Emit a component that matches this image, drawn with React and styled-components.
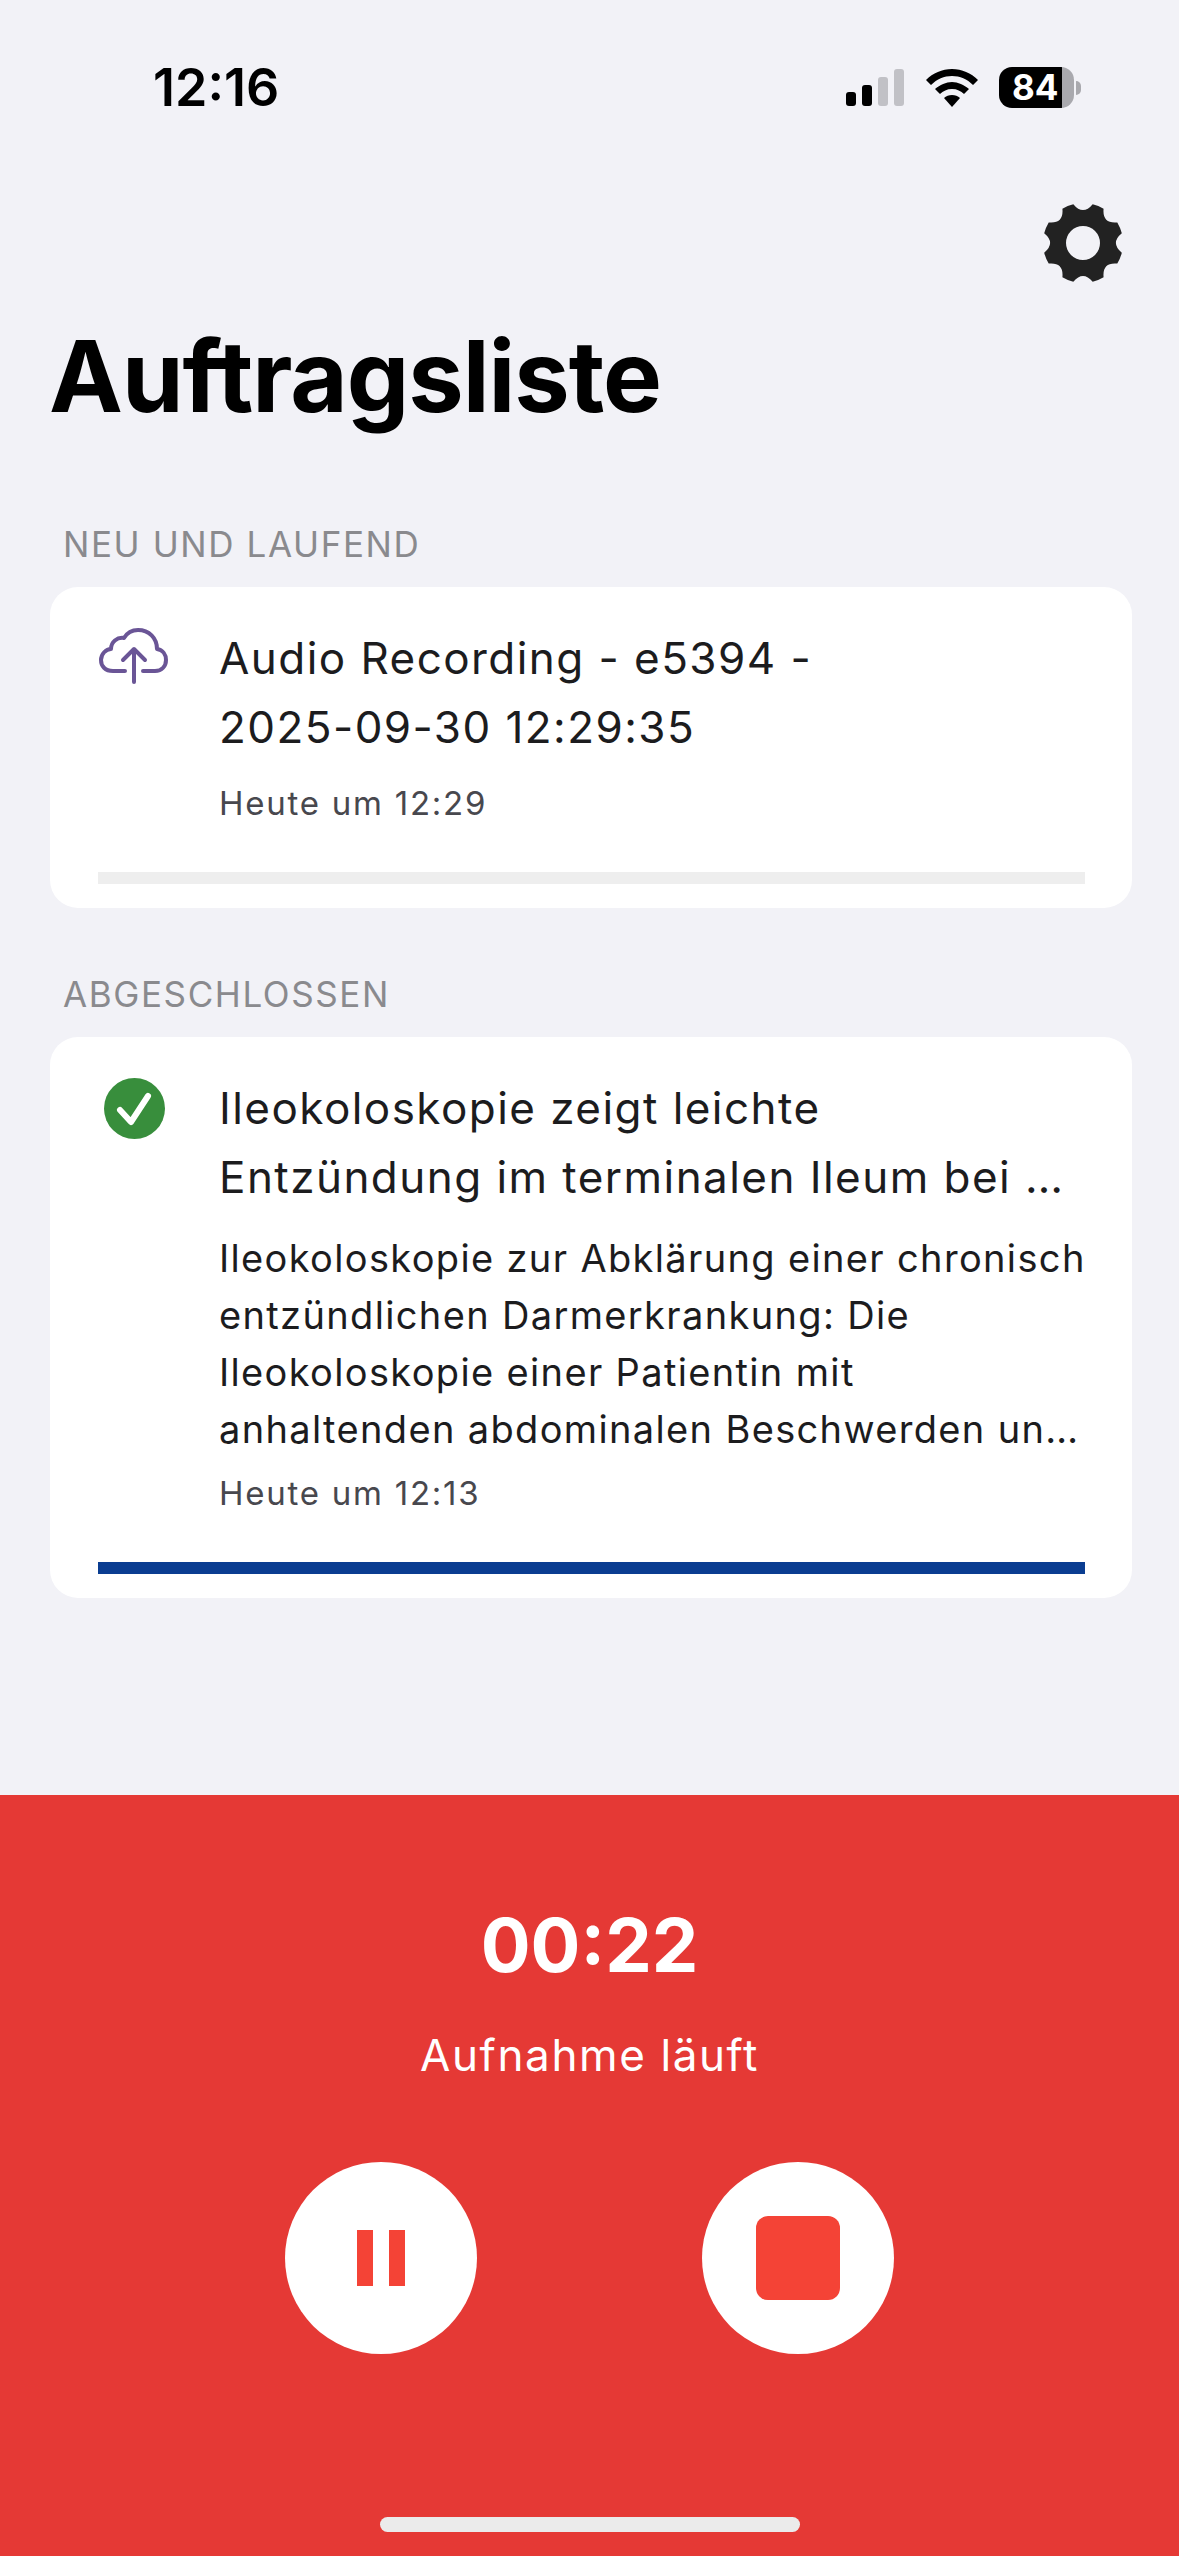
import React from 'react'
import styled, { createGlobalStyle } from 'styled-components'

const GlobalStyle = createGlobalStyle`
  html, body {
    margin: 0;
    padding: 0;
    background: #f2f2f7;
  }
  * {
    box-sizing: border-box;
  }
`

const Page = styled.div`
  width: 1179px;
  height: 2556px;
  display: flex;
  flex-direction: column;
  background: #f2f2f7;
  font-family: Inter, 'Liberation Sans', sans-serif;
  overflow: hidden;
`

const StatusBar = styled.div`
  height: 136px;
  padding: 67px 98px 0 153px;
  display: flex;
  justify-content: space-between;
  align-items: flex-start;
`

const Clock = styled.div`
  font-size: 52px;
  line-height: 41px;
  font-weight: 600;
  color: #000;
  letter-spacing: 0;
`

const StatusIcons = styled.div`
  display: flex;
  align-items: flex-start;
`

const Signal = styled.div`
  display: flex;
  align-items: flex-end;
  gap: 6px;
  height: 37px;
  margin: 2px 22px 0 0;
`

const SignalBar = styled.div`
  width: 10px;
  height: ${p => p.$h}px;
  border-radius: 3px;
  background: ${p => (p.$on ? '#000' : '#c1c1c6')};
`

const WifiIcon = styled.svg`
  width: 52px;
  height: 38px;
  margin: 2px 21px 0 0;
`

const Battery = styled.div`
  display: flex;
  align-items: center;
  gap: 2px;
`

const BatteryBody = styled.div`
  width: 75px;
  height: 41px;
  border-radius: 13px;
  background: linear-gradient(to right, #000 84%, #a9a9ae 84%);
  color: #fff;
  font-size: 35px;
  font-weight: 700;
  line-height: 41px;
  padding-left: 13px;
`

const BatteryTip = styled.div`
  width: 5px;
  height: 14px;
  border-radius: 0 7px 7px 0;
  background: #a9a9ae;
`

const TopRow = styled.div`
  display: flex;
  justify-content: flex-end;
  padding-right: 56px;
  height: 80px;
  margin-top: 67px;
`

const Heading = styled.h1`
  margin: 33px 0 0 49px;
  font-size: 99px;
  line-height: 120px;
  font-weight: 700;
  color: #000;
  letter-spacing: -1px;
`

const SectionLabel = styled.div`
  margin: ${p => p.$top}px 0 0 63px;
  height: 42px;
  font-size: 35px;
  line-height: 40px;
  color: #8a8a8e;
  letter-spacing: 1.6px;
  text-transform: uppercase;
`

const Card = styled.div`
  margin: 21px 47px 0 50px;
  padding: 37px 47px 24px 48px;
  background: #fff;
  border-radius: 28px;
`

const CardRow = styled.div`
  display: flex;
  gap: 49px;
`

const IconSlot = styled.div`
  flex: 0 0 72px;
  display: flex;
  justify-content: center;
  padding-top: 4px;
`

const CardText = styled.div`
  flex: 1;
  min-width: 0;
`

const CardTitle = styled.div`
  font-size: 44px;
  line-height: 69px;
  font-weight: 400;
  color: #1c1c1e;
  letter-spacing: 1.45px;
  white-space: nowrap;
`

const CardSummary = styled.div`
  margin-top: 18px;
  font-size: 38px;
  line-height: 57px;
  font-weight: 400;
  color: #1c1c1e;
  letter-spacing: 1.35px;
  white-space: nowrap;
`

const CardDate = styled.div`
  margin-top: ${p => p.$top}px;
  font-size: 33px;
  line-height: 40px;
  color: #48484e;
  letter-spacing: 1.75px;
`

const Progress = styled.div`
  margin-top: ${p => p.$top}px;
  height: 12px;
  background: ${p => p.$color};
`

const RecorderPanel = styled.div`
  margin-top: auto;
  height: 761px;
  background: #e53935;
  display: flex;
  flex-direction: column;
  align-items: center;
  color: #fff;
`

const Timer = styled.div`
  margin-top: 110px;
  font-size: 74px;
  line-height: 80px;
  font-weight: 700;
`

const RecorderStatus = styled.div`
  margin-top: 43px;
  font-size: 44px;
  line-height: 54px;
  letter-spacing: 1.6px;
`

const Controls = styled.div`
  margin-top: 80px;
  display: flex;
  gap: 225px;
`

const RoundButton = styled.button`
  width: 192px;
  height: 192px;
  border: 0;
  padding: 0;
  border-radius: 50%;
  background: #fff;
  display: flex;
  align-items: center;
  justify-content: center;
  gap: 16px;
`

const PauseBar = styled.span`
  width: 16px;
  height: 56px;
  background: #f44336;
`

const StopSquare = styled.span`
  width: 84px;
  height: 84px;
  border-radius: 12px;
  background: #f44336;
`

const HomeBar = styled.div`
  margin-top: 163px;
  width: 420px;
  height: 15px;
  border-radius: 8px;
  background: #ebebeb;
`

// 8 teeth, scalloped between them, outer radius 40 in a 80x80 box
const gearPath = () => {
  const R = 40
  const delta = (14 * Math.PI) / 180
  const pt = (a, r) => `${(40 + r * Math.sin(a)).toFixed(2)} ${(40 - r * Math.cos(a)).toFixed(2)}`
  let d = ''
  for (let i = 0; i < 8; i++) {
    const a = (i * Math.PI) / 4
    d += i === 0 ? `M${pt(a - delta, R)}` : `A${R} ${R} 0 0 1 ${pt(a - delta, R)}`
    d += `Q${pt(a, 27)} ${pt(a + delta, R)}`
  }
  d += `A${R} ${R} 0 0 1 ${pt(-delta, R)}Z`
  // hole
  d += 'M40 23a17 17 0 1 0 0 34a17 17 0 1 0 0-34Z'
  return d
}

const GearIcon = () => (
  <svg width="80" height="80" viewBox="0 0 80 80">
    <path d={gearPath()} fill="#222" fillRule="evenodd" />
  </svg>
)

const CloudIcon = () => (
  <svg width="70" height="56" viewBox="0 0 70 56" fill="none" stroke="#6a5596" strokeWidth="4" strokeLinecap="round" strokeLinejoin="round">
    <path d="M26 43H14C6 43 2 38 2 32C2 26 7 21 12 21C12 14 18 9 25 10C28 5 33 2 39 2C50 2 58 10 58 21C64 22 67 27 67 32C67 38 63 43 56 43H44" />
    <path d="M35 54V22M24 32L35 21L46 32" />
  </svg>
)

const CheckIcon = () => (
  <svg width="61" height="61" viewBox="0 0 61 61">
    <circle cx="30.5" cy="30.5" r="30.5" fill="#388e3c" />
    <path d="M16 32L27 44L44 18" fill="none" stroke="#fff" strokeWidth="6" strokeLinecap="round" strokeLinejoin="round" />
  </svg>
)

const App = () => (
  <Page>
    <GlobalStyle />
    <StatusBar>
      <Clock>12:16</Clock>
      <StatusIcons>
        <Signal>
          <SignalBar $h={14} $on />
          <SignalBar $h={21} $on />
          <SignalBar $h={29} />
          <SignalBar $h={37} />
        </Signal>
        <WifiIcon viewBox="0 0 52 38">
          <path d="M26 0C16 0 7 4 0 11L5 16C11 10 18 7 26 7C34 7 41 10 47 16L52 11C45 4 36 0 26 0Z" />
          <path d="M26 13C20 13 14 16 9 20L14 25C17 22 21 20 26 20C31 20 35 22 38 25L43 20C38 16 32 13 26 13Z" />
          <path d="M26 26C23 26 20 27 18 29L26 38L34 29C32 27 29 26 26 26Z" />
        </WifiIcon>
        <Battery>
          <BatteryBody>84</BatteryBody>
          <BatteryTip />
        </Battery>
      </StatusIcons>
    </StatusBar>

    <TopRow>
      <GearIcon />
    </TopRow>
    <Heading>Auftragsliste</Heading>

    <SectionLabel $top={88}>Neu und laufend</SectionLabel>
    <Card>
      <CardRow>
        <IconSlot>
          <CloudIcon />
        </IconSlot>
        <CardText>
          <CardTitle>
            Audio Recording - e5394 -
            <br />
            2025-09-30 12:29:35
          </CardTitle>
          <CardDate $top={21}>Heute um 12:29</CardDate>
        </CardText>
      </CardRow>
      <Progress $top={49} $color="#eeeeee" />
    </Card>

    <SectionLabel $top={66}>Abgeschlossen</SectionLabel>
    <Card>
      <CardRow>
        <IconSlot>
          <CheckIcon />
        </IconSlot>
        <CardText>
          <CardTitle>
            Ileokoloskopie zeigt leichte
            <br />
            Entzündung im terminalen Ileum bei …
          </CardTitle>
          <CardSummary>
            Ileokoloskopie zur Abklärung einer chronisch
            <br />
            entzündlichen Darmerkrankung: Die
            <br />
            Ileokoloskopie einer Patientin mit
            <br />
            anhaltenden abdominalen Beschwerden un…
          </CardSummary>
          <CardDate $top={15}>Heute um 12:13</CardDate>
        </CardText>
      </CardRow>
      <Progress $top={49} $color="#0a3d91" />
    </Card>

    <RecorderPanel>
      <Timer>00:22</Timer>
      <RecorderStatus>Aufnahme läuft</RecorderStatus>
      <Controls>
        <RoundButton aria-label="Pause">
          <PauseBar />
          <PauseBar />
        </RoundButton>
        <RoundButton aria-label="Stop">
          <StopSquare />
        </RoundButton>
      </Controls>
      <HomeBar />
    </RecorderPanel>
  </Page>
)

export default App
